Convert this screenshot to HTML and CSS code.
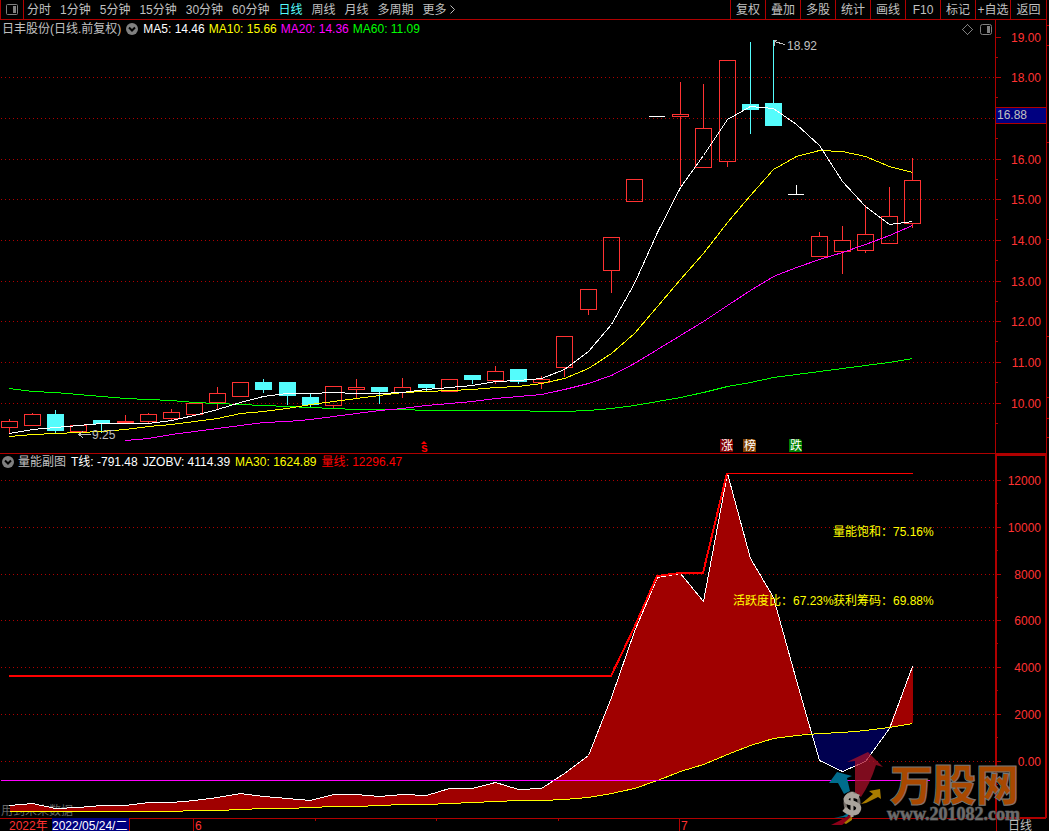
FILE: index.html
```html
<!DOCTYPE html>
<html lang="zh-CN">
<head>
    <meta charset="UTF-8">
    <meta name="viewport" content="width=device-width, initial-scale=1.0">
    <title>日丰股份 日线</title>
    <link rel="stylesheet" href="styles.css">
</head>
<body>
    <header class="toolbar">
        <button class="panel-toggle" aria-label="侧栏">
            <svg width="12" height="11" viewBox="0 0 12 11">
                <rect x="0.5" y="0.5" width="11" height="10" rx="1" fill="none" stroke="#808080"/>
                <rect x="7" y="2" width="3" height="7" fill="#808080"/>
            </svg>
        </button>
        <nav class="periods">
            <button>分时</button>
            <button>1分钟</button>
            <button>5分钟</button>
            <button>15分钟</button>
            <button>30分钟</button>
            <button>60分钟</button>
            <button class="active">日线</button>
            <button>周线</button>
            <button>月线</button>
            <button>多周期</button>
            <button>更多<svg width="7" height="9" viewBox="0 0 7 9"><path d="M1.500 0.500L5.500 4.500L1.500 8.500" fill="none" stroke="#c0c0c0"/></svg></button>
        </nav>
        <nav class="tools">
            <button>复权</button>
            <button>叠加</button>
            <button>多股</button>
            <button>统计</button>
            <button>画线</button>
            <button>F10</button>
            <button>标记</button>
            <button>+自选</button>
            <button>返回</button>
        </nav>
    </header>

    <main>
        <section class="pane">
            <div class="pane-title">
                <span>日丰股份(日线.前复权)</span>
                <svg class="drop" width="12" height="12" viewBox="0 0 12 12"><circle cx="6" cy="6" r="6" fill="#808080"/><path d="M3 4.500L6 7.500L9 4.500" fill="none" stroke="#000" stroke-width="2"/></svg>
                <span class="white">MA5: 14.46</span>
                <span class="yellow">MA10: 15.66</span>
                <span class="magenta">MA20: 14.36</span>
                <span class="green">MA60: 11.09</span>
            </div>
            <svg id="price" class="chart" viewBox="0 20 1049 434"></svg>
        </section>

        <section class="pane">
            <div class="pane-title sub">
                <svg class="drop" width="12" height="12" viewBox="0 0 12 12"><circle cx="6" cy="6" r="6" fill="#808080"/><path d="M3 4.500L6 7.500L9 4.500" fill="none" stroke="#000" stroke-width="2"/></svg>
                <span>量能副图</span>
                <span class="white">T线: -791.48</span>
                <span class="white">JZOBV: 4114.39</span>
                <span class="yellow">MA30: 1624.89</span>
                <span class="red">量线: 12296.47</span>
            </div>
            <svg id="volume" class="chart" viewBox="0 454 1049 364"></svg>
        </section>
    </main>

    <footer class="dates">
        <span class="year">2022年</span>
        <span class="current">2022/05/24/二</span>
        <span class="blank"></span>
        <span class="month">6</span>
        <span class="month">7</span>
        <span class="period">日线</span>
    </footer>

    <script src="chart.js"></script>
</body>
</html>
```

FILE: styles.css
```css
* {
    box-sizing: border-box;
}

body {
    margin: 0;
    height: 100vh;
    display: flex;
    flex-direction: column;
    overflow: hidden;
    background: #000;
    color: #c0c0c0;
    font-family: "Liberation Sans", "Noto Sans CJK SC", sans-serif;
    font-size: 12px;
    line-height: 18px;
}

button {
    padding: 0;
    border: none;
    background: none;
    color: inherit;
    font: inherit;
    line-height: 18px;
    white-space: nowrap;
    cursor: pointer;
}

/* top bar */
.toolbar {
    display: flex;
    height: 20px;
    margin-right: 2px;
    border-bottom: 1px solid #b00000;
    border-right: 1px solid #b00000;
}

.panel-toggle {
    width: 24px;
    border-left: 1px solid #b00000;
    border-right: 1px solid #b00000;
    display: flex;
    align-items: center;
    justify-content: center;
}

.periods {
    display: flex;
    gap: 9px;
    margin-left: 3px;
}

.periods .active {
    color: #54fcfc;
}

.periods svg {
    margin-left: 2px;
}

.tools {
    display: flex;
    margin-left: auto;
}

.tools button {
    width: 35px;
    border-left: 1px solid #b00000;
}

.tools button:last-child {
    width: 36px;
}

/* chart panes */
.pane {
    position: relative;
}

.chart {
    display: block;
    width: 100%;
    height: auto;
    overflow: visible;
    font-size: 12px;
}

.pane-title {
    position: absolute;
    top: 0;
    left: 2px;
    z-index: 1;
    display: flex;
    align-items: center;
    gap: 4px;
    white-space: nowrap;
}

.pane-title .drop {
    margin: 0 1px;
}

.pane-title.sub {
    top: -1px;
    gap: 5px;
}

.pane-title.sub .drop {
    margin: 0 -1px 0 0;
}

.white { color: #fff; }
.yellow { color: #ff0; }
.magenta { color: #f0f; }
.green { color: #0f0; }
.red { color: #f00; }

.line {
    fill: none;
    shape-rendering: crispEdges;
}

.frame {
    stroke: #b00000;
    shape-rendering: crispEdges;
}

.grid {
    stroke: #b00000;
    stroke-dasharray: 1 3;
    shape-rendering: crispEdges;
}

.up {
    fill: none;
    stroke: #ff3232;
    shape-rendering: crispEdges;
}

.down {
    fill: #54fcfc;
    stroke: #54fcfc;
    shape-rendering: crispEdges;
}

.axis {
    fill: #ff3232;
    text-anchor: end;
}

.note {
    fill: #c0c0c0;
}

.stat {
    fill: #ff0;
}

.brand {
    font: 900 43px "Noto Sans CJK SC", sans-serif;
    fill: #a84800;
    stroke: #777;
    stroke-width: 1px;
}

.brand-url {
    font: bold 18px "Liberation Serif", serif;
    fill: #6c6c6c;
    stroke: #444;
    stroke-width: 1px;
    paint-order: stroke;
}

/* date axis */
.dates {
    position: relative;
    flex: 1;
    display: grid;
    grid-template-columns: 52fr 78fr 63fr 486fr 317fr 53fr;
    overflow: hidden;
    line-height: 16px;
    white-space: nowrap;
}

.year {
    padding-left: 9px;
    color: #ff3232;
}

.current {
    border-right: 1px solid #b00000;
    background: #000080;
    color: #fff;
}

.month {
    padding-left: 1px;
    border-left: 1px solid #b00000;
    color: #ff3232;
}

.period {
    padding-left: 11px;
    border-left: 1px solid #b00000;
}
```

FILE: chart.js
```js
const RIGHT = 996;
const x = i => Math.round(9 + i * 23.154 - 0.2);

// top, bottom, high, low, down
const candles = [
    [421, 427, 419, 432], [414, 425, 413, 425], [414, 430, 410, 432, 1], [425, 431, 425, 431],
    [420, 423, 420, 432, 1], [421, 422, 415, 422], [414, 421, 413, 422], [412, 418, 409, 419],
    [403, 414, 403, 414], [393, 402, 387, 408], [382, 396, 382, 396], [382, 389, 379, 392, 1],
    [382, 395, 382, 404, 1], [397, 404, 394, 407, 1], [386, 405, 386, 408], [387, 389, 379, 397],
    [387, 391, 387, 403, 1], [387, 392, 378, 397], [384, 387, 384, 391, 1], [379, 391, 379, 391],
    [375, 379, 375, 383, 1], [371, 380, 366, 383], [369, 381, 369, 383, 1], [379, 382, 376, 388],
    [336, 367, 336, 376], [289, 309, 289, 314], [237, 270, 237, 292], [179, 201, 179, 201],
    null, [114, 116, 82, 185], [128, 167, 84, 167], [60, 161, 60, 166],
    [104, 109, 42, 133, 1], [103, 125, 40, 125, 1], null, [236, 256, 232, 256],
    [240, 251, 226, 273], [234, 250, 205, 252], [216, 243, 187, 243], [180, 223, 158, 227]
];

const ma5 = [433, 429, 427, 425, 423, 423, 423, 420, 415, 409, 402, 396, 393, 393, 392, 393, 393, 392, 389, 387,
    385, 381, 380, 378, 369, 351, 324, 283, 232, 187, 155, 119, 106, 108, 124, 145, 181, 206, 224, 221];
const ma10 = [436, 434, 433, 432, 431, 429, 426, 424, 421, 418, 413, 411, 408, 404, 401, 398, 395, 392, 391, 390,
    389, 387, 386, 383, 378, 368, 353, 333, 306, 279, 253, 222, 195, 169, 156, 150, 151, 156, 166, 172];
const ma20 = [440, 438, 434, 431, 428, 425, 422, 421, 419, 416, 413, 410, 408, 405, 403, 401, 398, 396, 394,
    389, 383, 375, 363, 349, 335, 321, 305, 290, 276, 267, 259, 252, 244, 235, 225];
const ma60 = [388, 391, 392, 394, 396, 398, 399, 400, 402, 403, 404, 405, 406, 407, 408, 409, 409, 409, 410, 410,
    410, 410, 410, 411, 411, 410, 408, 405, 401, 397, 392, 386, 382, 377, 374, 371, 368, 365, 362, 358];

const obv = [805, 803, 808, 807, 805, 805, 802, 802, 800, 797, 793, 796, 798, 800, 794, 794, 796, 794, 795, 788,
    788, 782, 789, 788, 773, 755, 697, 631, 577, 573, 601, 473, 558, 597, 680, 760, 771, 761, 728, 666];
const ma30 = [811, 811, 811, 811, 811, 811, 811, 811, 810, 810, 809, 808, 808, 807, 806, 806, 805, 804, 804, 803,
    802, 801, 800, 800, 799, 797, 793, 788, 780, 771, 764, 754, 745, 738, 735, 733, 732, 730, 727, 723];

const points = (ys, from = 0) => ys.map((y, i) => x(i + from) + '.5,' + y + '.5').join(' ');
const line = (pts, color, width = 1) =>
    `<polyline class="line" points="${pts}" stroke="${color}" stroke-width="${width}"/>`;
const hline = (cls, x1, x2, y) => `<path class="${cls}" d="M${x1} ${y}.5H${x2}"/>`;
const vline = (cls, x1, y1, y2) => `<path class="${cls}" d="M${x1}.5 ${y1}V${y2}"/>`;

function axis(rows, step) {
    let out = '';
    rows.forEach(([y, label]) => {
        if (y > 40) out += hline('grid', 1, RIGHT - 1, y);
        out += hline('frame', RIGHT, RIGHT + 5, y);
        out += hline('frame', RIGHT, RIGHT + 2, y + step);
        if (label) out += `<text class="axis" x="1041" y="${y + 5}">${label}</text>`;
    });
    return out;
}

function candle(c, i) {
    if (!c) return '';
    const [top, bottom, high, low, down] = c;
    const cls = down ? 'down' : 'up';
    return `<rect class="${cls}" x="${x(i) - 8}.5" y="${top}.5" width="16" height="${bottom - top}"/>` +
        vline(cls, x(i), high, top) + vline(cls, x(i), bottom, low + 1);
}

function badge(bx, color, text) {
    return `<path fill="${color}" d="M${bx} 439h11l2 2v11h-13z"/>
        <text x="${bx + 1}" y="450" fill="#fff">${text}</text>`;
}

function drawPrice() {
    let out = axis([[37, '19.00'], [77, '18.00'], [118, ''], [159, '16.00'], [199, '15.00'],
        [240, '14.00'], [281, '13.00'], [321, '12.00'], [362, '11.00'], [403, '10.00']], 20);
    out += candles.map(candle).join('');

    // one-price days
    out += '<path class="line" stroke="#fff" d="M649 116.500H665M788 194.500H804M796.500 185V194"/>';

    out += line(points(ma60), '#0f0') + line(points(ma20, 5), '#f0f');
    out += line(points(ma10), '#ff0') + line(points(ma5), '#fff');

    out += '<path class="line" stroke="#c0c0c0" d="M785 44.500L774 41.500M774.500 46V40.500H777M91 434.500H79M83 431L79 434.500L83 438"/>';
    out += '<text class="note" x="787" y="50">18.92</text><text class="note" x="92" y="439">9.25</text>';

    out += '<path fill="#f00" d="M421 444l3-3l3 3z"/><text x="421" y="452" fill="#f00" font-weight="bold">s</text>';
    out += badge(720, '#800000', '涨') + badge(743, '#804000', '榜') + badge(789, '#008000', '跌');

    out += '<rect x="996" y="107" width="50" height="16" fill="#000080"/>';
    out += hline('frame', 996, 1046, 107) + hline('frame', 996, 1046, 123);
    out += '<text class="note" x="997" y="119">16.88</text>';

    out += `<path class="line" stroke="#808080" d="M967.500 24.500L972.500 29.500L967.500 34.500L962.500 29.500Z"/>
        <rect x="980.5" y="24.5" width="11" height="10" rx="2" fill="none" stroke="#808080"/>
        <rect x="987" y="26" width="3" height="7" fill="#808080"/>`;

    out += vline('frame', 995, 20, 454) + vline('frame', 1046, 20, 454) + hline('frame', 0, 1046, 453);
    [25, 45, 142, 239, 336, 397, 418, 437].forEach(y => out += hline('frame', 1047, 1049, y));
    document.getElementById('price').innerHTML = out;
}

function drawVolume() {
    let out = axis([[480, '12000'], [527, '10000'], [574, '8000'], [620, '6000'],
        [667, '4000'], [714, '2000'], [761, '0.00']], 23);
    out += '<text x="1" y="815" fill="#666">用到未来数据</text>';

    // obv above its average is red, below is blue
    const pts = (ys, a, b) => ys.slice(a, b).map((y, i) => (x(a + i)) + '.5,' + y);
    const area = (list, color) => `<polygon shape-rendering="crispEdges" fill="${color}" points="${list.join(' ')}"/>`;
    out += area([...pts(obv, 0, 35), '812,733', ...pts(ma30, 0, 35).reverse()], '#a00000');
    out += area(['812,733', ...pts(obv, 35, 39), '889,727', ...pts(ma30, 35, 39).reverse()], '#000050');
    out += area(['889,727', '913,666', '913,723'], '#a00000');

    out += line(points(obv), '#fff') + line(points(ma30), '#ff0');
    out += line('9,676 611,676 634,628 657,576 680,573 703,573 727,473', '#f00', 2);
    out += line('727,473.5 913,473.5', '#f00');
    out += line('1,780.5 930,780.5', '#f0f');

    out += '<text class="stat" x="833" y="536">量能饱和：75.16%</text>';
    out += '<text class="stat" x="733" y="605">活跃度比：67.23%</text>';
    out += '<text class="stat" x="833" y="605">获利筹码：69.88%</text>';

    out += '<path class="line" stroke="#b00000" stroke-width="2" d="M996 818H1046M996 455H1047"/>';
    out += '<path class="line" stroke="#b00000" stroke-width="2" d="M996 454V818M1046 454V818"/>';
    out += hline('frame', 0, 996, 818);
    [315, 436, 558].forEach(tx => out += vline('frame', tx, 818, 821));

    out += `<g class="logo">
        <path fill="#a81028" fill-opacity="0.75" d="M847 762L868 752L883 767L876 765Q870 784 861 797L855 793V761Z"/>
        <path fill="#006c8c" d="M829 783L837 772L852 776L847 778L850 791L844 794L838 783Z"/>
        <path fill="#a87c00" d="M861 804L873 794L869 791L880 789L881 799L878 797L866 803Z"/>
        <path fill="#8c0018" d="M831 825L839 821L851 814L853 817L842 825Z"/>
        <path fill="#006c8c" d="M834 818L843 816L850 812L847 817Z"/>
        <path fill="#a87c00" d="M844 823L852 816L852 820L846 824Z"/>
        <ellipse cx="852" cy="803" rx="7" ry="10" fill="none" stroke="#77706a" stroke-width="3"/>
        <path fill="none" stroke="#aaa49c" stroke-width="5" d="M859 797Q848 793 846 799Q846 803 853 803Q862 806 857 812Q851 815 844 809"/>
        <path stroke="#aaa49c" stroke-width="3" d="M852 792V817"/>
        <text class="brand" x="890" y="801">万股网</text>
        <text class="brand-url" x="887" y="820">www.201082.com</text>
    </g>`;
    document.getElementById('volume').innerHTML = out;
}

drawPrice();
drawVolume();
```
